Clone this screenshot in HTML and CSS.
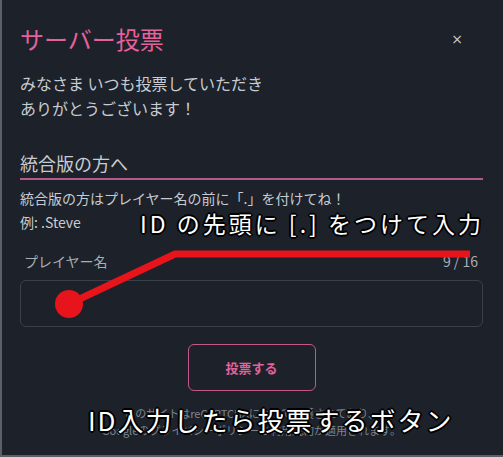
FILE: index.html
```html
<!DOCTYPE html>
<html lang="ja">
<head>
    <meta charset="UTF-8">
    <meta name="viewport" content="width=device-width, initial-scale=1.0">
    <title>サーバー投票</title>
    <link rel="stylesheet" href="styles.css">
</head>
<body>
    <div class="modal">
        <!-- Header -->
        <div class="modal-header">
            <h1 class="modal-title">サーバー投票</h1>
            <button class="close-btn">×</button>
        </div>

        <p class="intro">みなさま いつも投票していただき<br>ありがとうございます！</p>

        <!-- Bedrock notice -->
        <div class="section">
            <h2 class="section-title">統合版の方へ</h2>
            <p class="section-text">統合版の方はプレイヤー名の前に「.」を付けてね！<br>例: .Steve</p>
        </div>

        <!-- Form -->
        <div class="field">
            <div class="field-label">
                <span>プレイヤー名</span>
                <span>9 / 16</span>
            </div>
            <input class="field-input" type="text">
        </div>

        <div class="actions">
            <button class="vote-btn">投票する</button>
        </div>

        <p class="recaptcha">このサイトはreCAPTCHAによって保護されており、<br>Googleのプライバシーポリシーと利用規約が適用されます。</p>

        <!-- Annotations -->
        <svg class="pointer" width="503" height="457" viewBox="0 0 503 457">
            <polyline points="69,304 175,254 470,254" fill="none" stroke="#e8141c" stroke-width="7"/>
            <circle cx="69" cy="304" r="14" fill="#e8141c"/>
        </svg>
        <div class="note note-id">ID の先頭に [.] をつけて入力</div>
        <div class="note note-btn">ID入力したら投票するボタン</div>
    </div>
</body>
</html>
```

FILE: styles.css
```css
* {
    margin: 0;
    padding: 0;
    box-sizing: border-box;
}

body {
    font-family: "Noto Sans CJK JP", "Noto Sans", sans-serif;
    background-color: #1c212a;
    overflow: hidden;
}

.modal {
    position: relative;
    width: 503px;
    height: 457px;
    background-color: #1c212a;
    border-left: 2px solid #5b6067;
    border-bottom: 2px solid #5b6067;
    padding: 22px 20px 0 18px;
    color: #c8ccd2;
}

.modal-header {
    display: flex;
    justify-content: space-between;
    align-items: center;
    height: 32px;
}

.modal-title {
    font-size: 24px;
    font-weight: 400;
    color: #e3629b;
}

.close-btn {
    background: none;
    border: none;
    color: #c8ccd2;
    font-size: 14px;
    margin-right: 20px;
    margin-top: 2px;
    font-family: "DejaVu Sans", sans-serif;
}

.intro {
    margin-top: 17px;
    font-size: 16px;
    line-height: 25px;
}

.section {
    margin-top: 29px;
}

.section-title {
    font-size: 18px;
    font-weight: 400;
    padding-bottom: 2px;
    border-bottom: 2px solid #b4598b;
}

.section-text {
    margin-top: 6px;
    font-size: 14px;
    line-height: 24px;
}

.field {
    margin-top: 18px;
}

.field-label {
    display: flex;
    justify-content: space-between;
    font-size: 14px;
    color: #a9aeb5;
    padding: 0 5px 0 4px;
    line-height: 18px;
}

.field-input {
    display: block;
    width: 100%;
    height: 47px;
    margin-top: 10px;
    background: transparent;
    border: 1px solid #3a404a;
    border-radius: 6px;
}

.actions {
    display: flex;
    justify-content: center;
    margin-top: 17px;
}

.vote-btn {
    width: 128px;
    height: 47px;
    background: transparent;
    border: 1px solid #c2588b;
    border-radius: 6px;
    color: #e3629b;
    font-family: inherit;
    font-size: 13px;
    font-weight: 700;
}

.recaptcha {
    margin-top: 14px;
    text-align: center;
    font-size: 11px;
    line-height: 17px;
    color: #7e858e;
}

.pointer {
    position: absolute;
    left: -2px;
    top: 0;
}

.note {
    position: absolute;
    color: #ffffff;
    white-space: nowrap;
    text-shadow:
        -2px 0 #000, 2px 0 #000, 0 -2px #000, 0 2px #000,
        -1px -1px #000, 1px -1px #000, -1px 1px #000, 1px 1px #000;
}

.note-id {
    left: 138px;
    top: 206px;
    font-size: 23px;
    letter-spacing: 3px;
}

.note-btn {
    left: 86px;
    top: 401px;
    font-size: 26px;
    letter-spacing: 2px;
}
```
